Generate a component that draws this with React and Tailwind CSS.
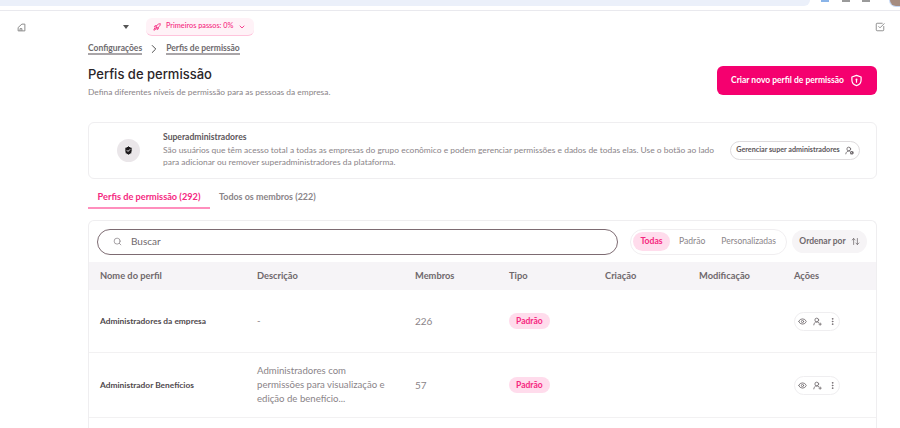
import { Rocket, ChevronDown, ChevronRight, Search, Eye, UserRoundPlus, UserRoundCog, EllipsisVertical, ArrowUpDown, ShieldCheck, SquareCheckBig } from 'lucide-react';

const GRID = 'grid grid-cols-[157px_158px_94px_96px_94px_95px_1fr] items-center pl-[11px]';

const columns = ['Nome do perfil', 'Descrição', 'Membros', 'Tipo', 'Criação', 'Modificação', 'Ações'];

const rows = [
  { name: 'Administradores da empresa', desc: '-', members: '226', h: 'h-[63px]' },
  {
    name: 'Administrador Benefícios',
    desc: 'Administradores com permissões para visualização e edição de benefício...',
    members: '57',
    h: 'h-[65px]',
  },
];

function ShieldLock({ className }) {
  return (
    <svg viewBox="0 0 24 24" className={className} fill="none" stroke="currentColor" strokeWidth="2.2" strokeLinejoin="round">
      <path d="M12 2.500 20.500 5.500V11c0 5.500-3.600 9-8.500 10.500C7.100 20 3.500 16.500 3.500 11V5.500Z" />
      <circle cx="12" cy="10" r="1.800" fill="currentColor" stroke="none" />
      <path d="M12 11v4" strokeLinecap="round" />
    </svg>
  );
}

function CompanyIcon({ className }) {
  return (
    <svg viewBox="0 0 24 24" className={className} fill="none" stroke="currentColor" strokeWidth="2.600" strokeLinejoin="round">
      <path d="M3 21V12L13 3H21V21Z" />
      <path d="M8 21V15H13V21" />
    </svg>
  );
}

export default function App() {
  return (
    <div className="w-[900px] h-[428px] overflow-hidden bg-white font-['Lato','Noto_Sans',sans-serif] text-[#6f686c]">
      {/* Browser strip */}
      <div className="h-[11px] flex items-start border-b border-[#e9e9ee]">
        <div className="w-[810px] h-[6px] bg-[#ebf0fa] rounded-br-lg" />
        <div className="flex-1 flex items-start pl-[11px]">
          <div className="w-[8px] h-[2px] bg-[#8ab4e8]" />
          <div className="ml-[13px] w-[8px] h-[2px] bg-[#9a9a9a]" />
          <div className="ml-[12px] w-[8px] h-[2px] bg-[#9a9a9a]" />
          <div className="ml-auto w-[10px] h-[6px] rounded-bl-full bg-[#a58c80] ring-1 ring-[#c5d8f5]" />
        </div>
      </div>

      {/* Top bar */}
      <div className="h-[28px] pt-[4px] flex items-center pl-[17px] pr-[15px]">
        <CompanyIcon className="w-[9px] h-[9px] text-[#8a8a8a]" />
        <div className="ml-[97px] w-0 h-0 border-x-[3px] border-x-transparent border-t-[4px] border-t-[#555]" />
        <div className="ml-[17px] w-[108px] h-[18px] flex items-center gap-[5px] pl-[7px] rounded-md bg-[#fff2f7] border-b border-[#ffc4dc] text-[#f5287f]">
          <Rocket className="w-[8px] h-[8px]" strokeWidth={2.6} />
          <span className="text-[7.300px] font-medium whitespace-nowrap">Primeiros passos: 0%</span>
          <ChevronDown className="w-[8px] h-[8px]" strokeWidth={2.6} />
        </div>
        <SquareCheckBig className="ml-auto w-[10px] h-[10px] text-[#8a8a8a]" strokeWidth={2.2} />
      </div>

      <main className="pl-[88px] pr-[23px]">
        {/* Breadcrumb */}
        <nav className="h-[20px] flex items-center text-[8.500px] font-bold text-[#6e6a6d]">
          <span className="border-b-2 border-[#a9a5a8] leading-[10px]">Configurações</span>
          <ChevronRight className="w-[14px] h-[14px] mx-[5px] text-[#444]" strokeWidth={1.6} />
          <span className="border-b-2 border-[#a9a5a8] leading-[10px]">Perfis de permissão</span>
        </nav>

        {/* Title + CTA */}
        <div className="mt-[7px] h-[29px] flex items-start justify-between">
          <div>
            <h1 className="font-['Inter',sans-serif] text-[13px] leading-[16px] font-medium text-[#2a2529]">Perfis de permissão</h1>
            <p className="mt-[4px] text-[8.400px] leading-[12px] text-[#8a8488] whitespace-nowrap">Defina diferentes níveis de permissão para as pessoas da empresa.</p>
          </div>
          <button className="w-[160px] h-[29px] flex items-center justify-center gap-[6px] rounded-md bg-[#f5006f] text-white text-[8.500px] font-bold">
            Criar novo perfil de permissão
            <ShieldLock className="w-[13px] h-[13px]" />
          </button>
        </div>

        {/* Superadmin card */}
        <section className="mt-[27px] h-[57px] flex items-center rounded-md border border-[#efeef0]">
          <div className="ml-[28px] w-[23px] h-[23px] rounded-full bg-[#eae6e9] flex items-center justify-center shrink-0">
            <ShieldCheck className="w-[11px] h-[11px] text-white fill-[#1d191c]" strokeWidth={2} />
          </div>
          <div className="ml-[23px] w-[559px]">
            <h2 className="text-[8.600px] leading-[12px] font-bold text-[#5c565a] -mt-[2px]">Superadministradores</h2>
            <p className="mt-[2px] text-[8.440px] leading-[11.500px] text-[#8a8488]">
              São usuários que têm acesso total a todas as empresas do grupo econômico e podem gerenciar permissões e dados de todas elas. Use o botão ao lado para adicionar ou remover superadministradores da plataforma.
            </p>
          </div>
          <button className="ml-[8px] w-[130px] h-[19px] shrink-0 flex items-center justify-center gap-[5px] rounded-full border border-[#dedbdd] text-[7.200px] font-bold text-[#5c565a] whitespace-nowrap">
            Gerenciar super administradores
            <UserRoundCog className="w-[9px] h-[9px]" />
          </button>
        </section>

        {/* Tabs */}
        <div className="mt-[9px] h-[21px] flex items-stretch font-bold">
          <div className="w-[122px] pb-[2px] flex items-center justify-center border-b-2 border-[#ff8fbd] text-[9.200px] text-[#f5287f] whitespace-nowrap">Perfis de permissão (292)</div>
          <div className="ml-[9px] pb-[4px] flex items-center text-[8.950px] text-[#8a8488] whitespace-nowrap">Todos os membros (222)</div>
        </div>

        {/* Table card */}
        <section className="mt-[11px] rounded-t-md border border-b-0 border-[#efeef0] h-[220px] overflow-hidden">
          <div className="h-[41px] flex items-center pl-[8px] pr-[9px]">
            <div className="w-[521px] h-[26px] flex items-center pl-[15px] rounded-full border border-[#7d6b72]">
              <Search className="w-[9px] h-[9px] text-[#8a8488]" />
              <span className="ml-[9px] text-[10px] text-[#6f686c]">Buscar</span>
            </div>
            <div className="ml-[12px] w-[157px] h-[26px] flex items-center pl-[2px] rounded-full border border-[#f0eef0] text-[8.600px] text-[#8a8488]">
              <span className="w-[37px] h-[19px] flex items-center justify-center rounded-full bg-[#ffdcec] font-bold text-[#f5287f]">Todas</span>
              <span className="ml-[9px]">Padrão</span>
              <span className="ml-[16px] text-[8.500px]">Personalizadas</span>
            </div>
            <div className="ml-auto w-[75px] h-[23px] flex items-center justify-center gap-[5px] rounded-full bg-[#f6f4f6] text-[8.500px] font-bold text-[#6f686c]">
              Ordenar por
              <ArrowUpDown className="w-[9px] h-[9px]" />
            </div>
          </div>

          <div className={`${GRID} h-[28px] bg-[#f6f4f7] text-[9.300px] font-bold text-[#6f686c]`}>
            {columns.map((c) => <div key={c}>{c}</div>)}
          </div>

          {rows.map((r) => (
            <div key={r.name} className={`${GRID} ${r.h} border-b border-[#f2f1f2]`}>
              <div className="text-[8.400px] font-bold text-[#4f494d]">{r.name}</div>
              <div className="pr-[24px] text-[9.600px] leading-[14px] text-[#8a8488]">{r.desc}</div>
              <div className="text-[10px] text-[#8a8488]">{r.members}</div>
              <div className="flex">
                <span className="flex items-center px-[7px] h-[16px] rounded-full bg-[#ffdcec] text-[8.500px] font-bold text-[#f5287f]">Padrão</span>
              </div>
              <div />
              <div />
              <div>
                <div className="w-[46px] h-[19px] flex items-center justify-center gap-[6px] rounded-full border border-[#efeef0] text-[#6f686c]">
                  <Eye className="w-[9px] h-[9px]" strokeWidth={2.2} />
                  <UserRoundPlus className="w-[9px] h-[9px]" strokeWidth={2.2} />
                  <EllipsisVertical className="w-[9px] h-[9px]" strokeWidth={2.4} />
                </div>
              </div>
            </div>
          ))}
        </section>
      </main>
    </div>
  );
}
